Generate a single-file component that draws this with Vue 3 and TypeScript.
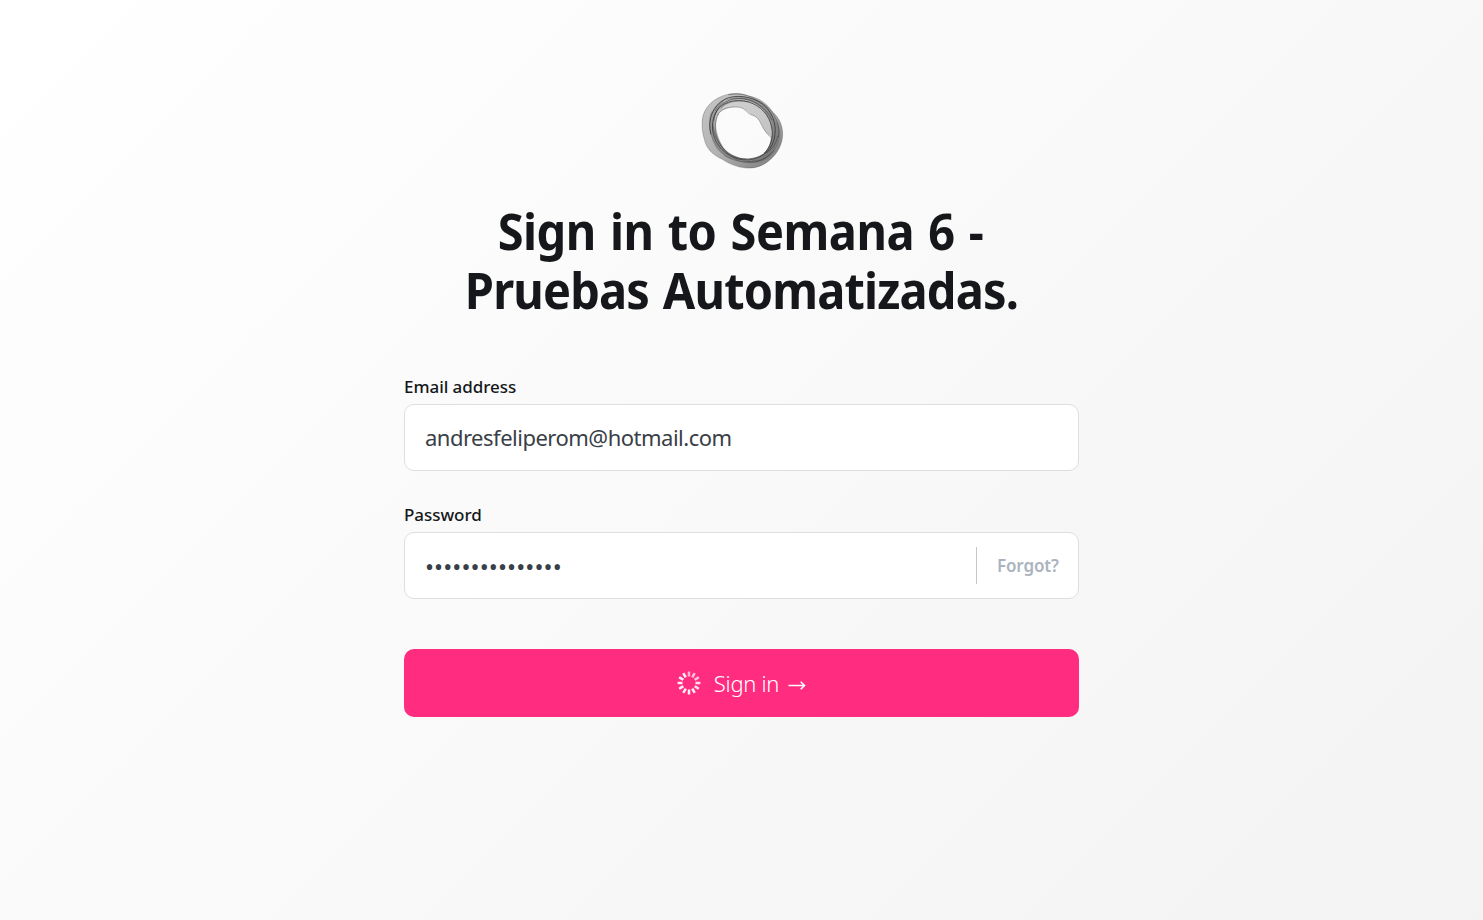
<script setup lang="ts">
import { ref } from 'vue'

const email = ref('andresfeliperom@hotmail.com')
const password = ref('•'.repeat(15))
const ticks = Array.from({ length: 12 }, (_, i) => ({
  angle: i * 30,
  opacity: i === 0 ? 0.65 : i < 3 ? 0.7 : i < 5 ? 0.85 : 0.92,
}))
</script>

<template>
  <main class="page">
    <form class="signin" @submit.prevent>
      <header class="head">
        <svg class="logo" viewBox="0 0 300 282" aria-hidden="true">
          <defs>
            <linearGradient id="ring" x1="0" y1="0" x2="1" y2="1">
              <stop offset="0" stop-color="#c6c6c6" />
              <stop offset=".5" stop-color="#b2b2b2" />
              <stop offset="1" stop-color="#777" />
            </linearGradient>
          </defs>
          <path fill="url(#ring)" fill-rule="evenodd" d="M31 108C34 68 68 41 104 32C128 26 150 28 168 36C202 40 228 62 242 84C262 102 272 124 272 150C272 180 257 207 237 225C216 245 190 254 163 252C136 250 112 240 91 226C62 213 43 194 37 166C31 147 29 126 31 108ZM77 94C65 125 77 161 96 193C112 210 135 222 161 225C184 225 206 219 218 207C230 193 237 174 237 157C224 150 215 136 209 122C201 105 195 97 179 92C165 85 161 73 143 70C115 66 88 75 77 94Z" />
          <path fill="#dadada" fill-opacity=".6" d="M88 75C105 52 140 46 169 53C199 61 226 86 237 112C244 130 242 149 237 161C225 150 215 136 209 122C201 105 195 97 179 92C165 85 161 73 143 70C122 66 100 68 88 75Z" />
          <path fill="#555" fill-opacity=".35" d="M98 50C130 29 180 37 209 57C235 72 243 99 256 117C274 150 262 190 233 218C207 241 174 239 151 235C190 231 220 215 233 183C251 145 239 95 204 68C174 45 136 38 98 50Z" />
          <path fill="#444" fill-opacity=".3" d="M54 101C61 72 82 50 108 40C83 62 65 92 67 124C69 158 89 187 109 209C125 222 144 227 163 229C132 231 105 224 84 205C58 180 49 136 54 101Z" />
          <g fill="none" stroke="#333" stroke-linecap="round">
            <path stroke-opacity=".75" stroke-width="3" d="M56 150C46 108 61 67 97 47C128 29 179 37 210 59C240 82 253 117 249 150C246 194 213 223 170 228C127 230 91 207 73 174C57 145 57 105 76 78C98 48 147 42 183 59C216 74 239 106 241 143C242 174 230 194 217 207" />
            <path stroke-opacity=".55" stroke-width="2.5" d="M65 111C68 72 100 44 139 44C180 42 222 67 240 108M62 122C65 163 91 206 132 219C162 231 200 224 224 203M79 91C57 133 77 181 108 208C127 224 149 224 163 225M110 32C142 26 169 33 186 44C219 58 238 79 248 98C260 118 263 139 259 158M224 206C241 196 253 177 257 157M99 215C134 237 167 234 198 230C214 228 232 214 246 200" />
            <path stroke-opacity=".4" stroke-width="2" d="M31 108C34 68 68 41 104 32C128 26 150 28 168 36C202 40 228 62 242 84C262 102 272 124 272 150C272 180 257 207 237 225C216 245 190 254 163 252C136 250 112 240 91 226C62 213 43 194 37 166C31 147 29 126 31 108M70 80C86 51 130 36 167 46C208 58 235 93 239 135M58 84C44 125 59 182 98 212M126 222C151 244 205 240 232 213" />
            <path stroke-opacity=".5" stroke-width="2" d="M77 92C88 74 115 66 142 70C162 73 164 89 180 93C197 98 201 108 209 124C216 139 227 151 237 161M86 73C105 51 139 48 170 54" />
          </g>
        </svg>
        <h1 class="title"><span class="title-start">Sign in to Semana 6 -</span><br>Pruebas Automatizadas.</h1>
      </header>

      <label class="label label-email" for="email">Email address</label>
      <div class="field"><span id="email" class="value">{{ email }}</span></div>

      <label class="label label-password" for="password">Password</label>
      <div class="field">
        <span id="password" class="dots">{{ password }}</span>
        <span class="forgot"><span class="forgot-text">Forgot?</span></span>
      </div>

      <button class="submit" type="submit">
        <svg class="spinner" viewBox="-12 -12 24 24" aria-hidden="true">
          <rect v-for="t in ticks" :key="t.angle" x="-1.25" y="-11.4" width="2.5" height="4.9" rx=".3" fill="#fff" :fill-opacity="t.opacity" :transform="`rotate(${t.angle})`" />
        </svg>
        <span class="submit-text">Sign in</span>
        <svg class="arrow" viewBox="0 0 18 12" aria-hidden="true">
          <path d="M.5 6.5H16M12.7 2.7L16.5 6.5L12.7 10.3" fill="none" stroke="#fff" stroke-width="1.6" />
        </svg>
      </button>
    </form>
  </main>
</template>

<style>
body {
  margin: 0;
}
</style>

<style scoped>
.page {
  box-sizing: border-box;
  height: 920px;
  padding-top: 84px;
  display: flex;
  justify-content: center;
  background: linear-gradient(135deg, #fff 0%, #f3f3f3 100%);
  font-family: "Noto Sans", "Open Sans", sans-serif;
  color: #15171a;
  overflow: hidden;
}
.signin {
  width: 675px;
  display: flex;
  flex-direction: column;
}
.head {
  display: flex;
  flex-direction: column;
  align-items: center;
}
.logo {
  width: 100px;
  height: 94px;
  margin-left: 1px;
}
.title {
  margin: 23px 0 0;
  font-size: 50.5px;
  line-height: 59px;
  font-weight: 700;
  letter-spacing: -0.9px;
  word-spacing: 2.5px;
  text-align: center;
  white-space: nowrap;
  transform: scaleX(0.93);
}
.title-start {
  margin-right: 2px;
  letter-spacing: -0.5px;
}
.label {
  font-size: 17px;
  line-height: 24px;
  font-weight: 500;
  letter-spacing: -0.05px;
  white-space: nowrap;
}
.label-email {
  margin: 56px 0 5px;
}
.label-password {
  margin: 32px 0 5px;
}
.field {
  box-sizing: border-box;
  height: 67px;
  padding-left: 20px;
  display: flex;
  align-items: center;
  background: #fff;
  border: 1px solid #dddedf;
  border-radius: 10px;
}
.value {
  margin-top: -2px;
  font-size: 22px;
  letter-spacing: -0.5px;
  color: #394047;
}
.dots {
  margin-top: 2px;
  font-size: 24px;
  letter-spacing: 0.1px;
  color: #394047;
}
.forgot {
  margin-left: auto;
  box-sizing: border-box;
  width: 102px;
  height: 37px;
  padding-left: 20px;
  display: flex;
  align-items: center;
  border-left: 1px solid #c5c7c9;
}
.forgot-text {
  font-size: 17px;
  font-weight: 600;
  letter-spacing: -0.15px;
  color: #abb4be;
}
.submit {
  margin-top: 50px;
  height: 68px;
  padding: 0;
  display: flex;
  align-items: center;
  justify-content: center;
  border: 0;
  border-radius: 10px;
  background: #ff2c80;
  color: #fff;
  font-family: inherit;
  font-size: 22px;
  font-weight: 300;
}
.submit-text {
  letter-spacing: -0.3px;
}
.spinner {
  width: 24px;
  height: 24px;
  margin-right: 13px;
}
.arrow {
  width: 18px;
  height: 12px;
  margin: 4px 0 0 9px;
}
</style>
